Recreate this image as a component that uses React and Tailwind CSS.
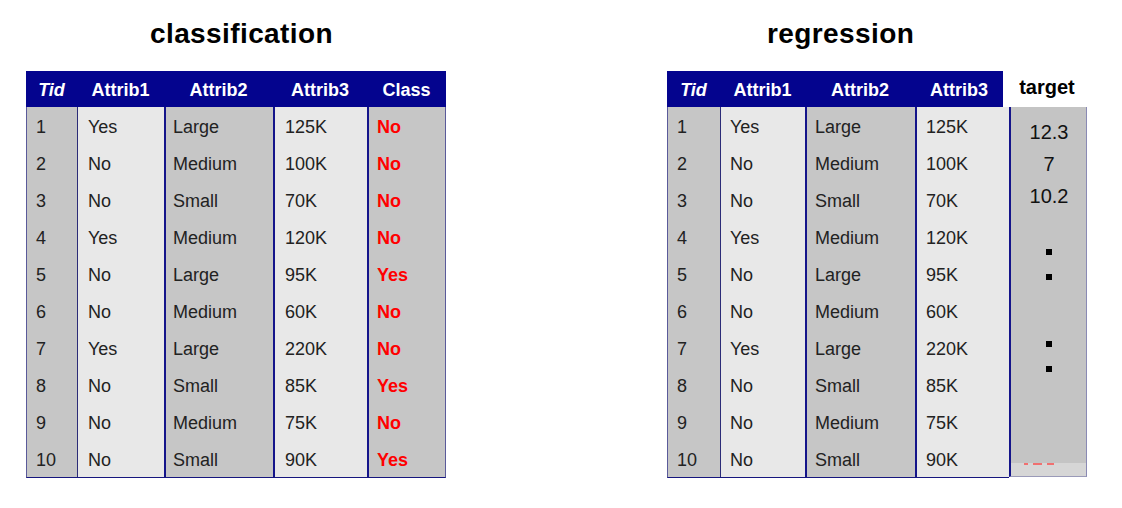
import React from "react";

const rows = [
  ["1", "Yes", "Large", "125K", "No"],
  ["2", "No", "Medium", "100K", "No"],
  ["3", "No", "Small", "70K", "No"],
  ["4", "Yes", "Medium", "120K", "No"],
  ["5", "No", "Large", "95K", "Yes"],
  ["6", "No", "Medium", "60K", "No"],
  ["7", "Yes", "Large", "220K", "No"],
  ["8", "No", "Small", "85K", "Yes"],
  ["9", "No", "Medium", "75K", "No"],
  ["10", "No", "Small", "90K", "Yes"],
];

const font = { fontFamily: '"Liberation Sans", Arial, sans-serif' };

function HeadCell({ w, children, italic }) {
  return (
    <div
      className={`h-[36px] pt-[2px] text-[18px] leading-[34px] font-bold text-white text-center ${italic ? "italic" : ""} ${w}`}
    >
      {children}
    </div>
  );
}

function BodyCol({ w, bg, border, pad, idx, red }) {
  return (
    <div className={`flex flex-col ${w} ${bg} ${border}`}>
      {rows.map((r, i) => (
        <div
          key={i}
          className={`h-[37px] pt-[4px] text-[18px] leading-[33px] ${pad} ${red ? "text-[#ff0000] font-bold" : "text-[#222]"}`}
        >
          {r[idx]}
        </div>
      ))}
    </div>
  );
}

function ClassificationTable() {
  return (
    <div className="flex flex-col w-[420px]">
      <div className="flex bg-[#04048e]">
        <HeadCell w="w-[51px]" italic>Tid</HeadCell>
        <HeadCell w="w-[87px]">Attrib1</HeadCell>
        <HeadCell w="w-[109px]">Attrib2</HeadCell>
        <HeadCell w="w-[94px]">Attrib3</HeadCell>
        <HeadCell w="w-[79px]">Class</HeadCell>
      </div>
      <div className="flex border-x border-b border-x-[#5a5a9a] border-b-[#16167e]">
        <BodyCol w="w-[50px]" bg="bg-[#c6c6c6]" border="" pad="pl-[9px]" idx={0} />
        <BodyCol w="w-[87px]" bg="bg-[#e8e8e8]" border="border-l border-[#2c2c78]" pad="pl-[10px]" idx={1} />
        <BodyCol w="w-[109px]" bg="bg-[#c6c6c6]" border="border-l-2 border-[#14148a]" pad="pl-[7px]" idx={2} />
        <BodyCol w="w-[94px]" bg="bg-[#e8e8e8]" border="border-l-2 border-[#14148a]" pad="pl-[10px]" idx={3} />
        <BodyCol w="w-[78px]" bg="bg-[#c6c6c6]" border="border-l-2 border-[#14148a]" pad="pl-[8px]" idx={4} red />
      </div>
    </div>
  );
}

function Dot({ mt }) {
  return <div className={`w-[6px] h-[6px] bg-black ${mt}`} />;
}

function RegressionTable() {
  return (
    <div className="flex flex-col w-[420px]">
      <div className="flex">
        <div className="flex w-[336px] bg-[#04048e]">
          <HeadCell w="w-[53px]" italic>Tid</HeadCell>
          <HeadCell w="w-[85px]">Attrib1</HeadCell>
          <HeadCell w="w-[110px]">Attrib2</HeadCell>
          <HeadCell w="w-[88px]">Attrib3</HeadCell>
        </div>
        <div className="w-[84px] h-[36px] pt-[3px] pl-[4px] text-center text-[20px] leading-[26px] font-bold text-black">
          target
        </div>
      </div>
      <div className="flex">
        <div className="flex border-l border-b border-l-[#5a5a9a] border-b-[#16167e]">
          <BodyCol w="w-[52px]" bg="bg-[#c6c6c6]" border="" pad="pl-[9px]" idx={0} />
          <BodyCol w="w-[85px]" bg="bg-[#e8e8e8]" border="border-l border-[#2c2c78]" pad="pl-[9px]" idx={1} />
          <BodyCol w="w-[110px]" bg="bg-[#c6c6c6]" border="border-l-2 border-[#14148a]" pad="pl-[8px]" idx={2} />
          <BodyCol w="w-[94px]" bg="bg-[#e8e8e8]" border="border-l-2 border-[#14148a]" pad="pl-[9px]" idx={3} />
        </div>
        <div className="flex flex-col w-[79px] h-[370px] border-l-2 border-l-[#14148a] border-r border-r-[#8a8ab4] border-b border-b-[#9a9ab8]">
          <div className="flex-1 bg-[#c4c4c4] flex flex-col items-center pt-[9px] pl-[1px]">
            <div className="text-[20px] leading-[32px] text-[#111]">12.3</div>
            <div className="text-[20px] leading-[32px] text-[#111]">7</div>
            <div className="text-[20px] leading-[32px] text-[#111]">10.2</div>
            <Dot mt="mt-[37px]" />
            <Dot mt="mt-[19px]" />
            <Dot mt="mt-[61px]" />
            <Dot mt="mt-[19px]" />
          </div>
          <div className="h-[13px] bg-[#d6d6d6] flex items-start pl-[13px] gap-[5px]">
            <div className="w-[4px] h-[2px] bg-[#f07070]" />
            <div className="w-[9px] h-[2px] bg-[#f07070]" />
            <div className="w-[7px] h-[2px] bg-[#f07070]" />
          </div>
        </div>
      </div>
    </div>
  );
}

export default function App() {
  return (
    <div className="w-[1122px] h-[508px] bg-white flex" style={font}>
      <div className="flex flex-col ml-[26px] pt-[18px]">
        <div className="h-[30px] pl-[124px] text-[28px] leading-[31px] font-bold text-black tracking-[0.4px] mb-[23px]">
          classification
        </div>
        <ClassificationTable />
      </div>
      <div className="flex flex-col ml-[221px] pt-[18px]">
        <div className="h-[30px] pl-[100px] text-[28px] leading-[31px] font-bold text-black tracking-[0.4px] mb-[23px]">
          regression
        </div>
        <RegressionTable />
      </div>
    </div>
  );
}
